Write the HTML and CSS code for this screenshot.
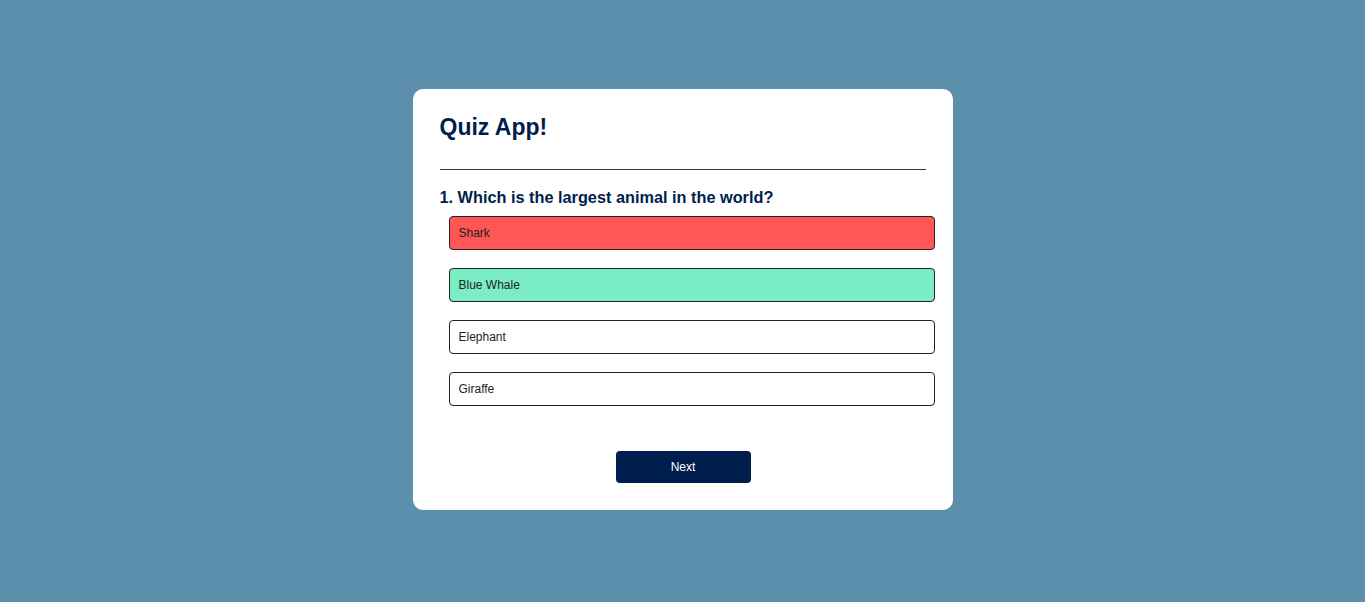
FILE: index.html
```html
<!DOCTYPE html>
<html lang="en">
<head>
<meta charset="utf-8">
<title>Quiz App</title>
<link rel="stylesheet" href="styles.css">
</head>
<body>
<div class="app">
  <h1 class="title">Quiz App!</h1>
  <div class="quiz">
    <h2 class="question">1. Which is the largest animal in the world?</h2>
    <div class="answers">
      <button class="btn incorrect">Shark</button>
      <button class="btn correct">Blue Whale</button>
      <button class="btn">Elephant</button>
      <button class="btn">Giraffe</button>
    </div>
    <button class="next">Next</button>
  </div>
</div>
</body>
</html>
```
FILE: styles.css
```css
* { box-sizing: border-box; }
html, body { margin: 0; padding: 0; }
body {
  background: #5b8fac;
  font-family: "Liberation Sans", Arial, sans-serif;
  height: 602px;
  padding-top: 89px;
}
.app {
  background: #fff;
  width: 540px;
  margin: 0 auto;
  border-radius: 10px;
  padding: 24px 27px 27px;
}
.title {
  margin: 0;
  font-size: 23px;
  line-height: 28px;
  font-weight: 700;
  color: #001e4d;
  padding-bottom: 28px;
  border-bottom: 1px solid #333;
}
.quiz { padding-top: 17px; }
.question {
  margin: 0;
  font-size: 16.3px;
  line-height: 20px;
  font-weight: 700;
  color: #001e4d;
}
.answers {
  display: flex;
  flex-direction: column;
  gap: 18px;
  margin: 9px 0 0 9px;
}
.btn {
  display: block;
  width: 486px;
  height: 34px;
  text-align: left;
  padding: 0 9px;
  background: #fff;
  color: #222;
  border: 1px solid #222;
  border-radius: 4px;
  font-family: "Liberation Sans", Arial, sans-serif;
  font-size: 12px;
}
.btn.incorrect { background: #ff5656; }
.btn.correct { background: #7aedc4; }
.next {
  display: block;
  margin: 45px 0 0 176px;
  width: 135px;
  height: 32px;
  background: #001e4d;
  color: #fff;
  border: 0;
  border-radius: 4px;
  font-family: "Liberation Sans", Arial, sans-serif;
  font-size: 12px;
}
```
